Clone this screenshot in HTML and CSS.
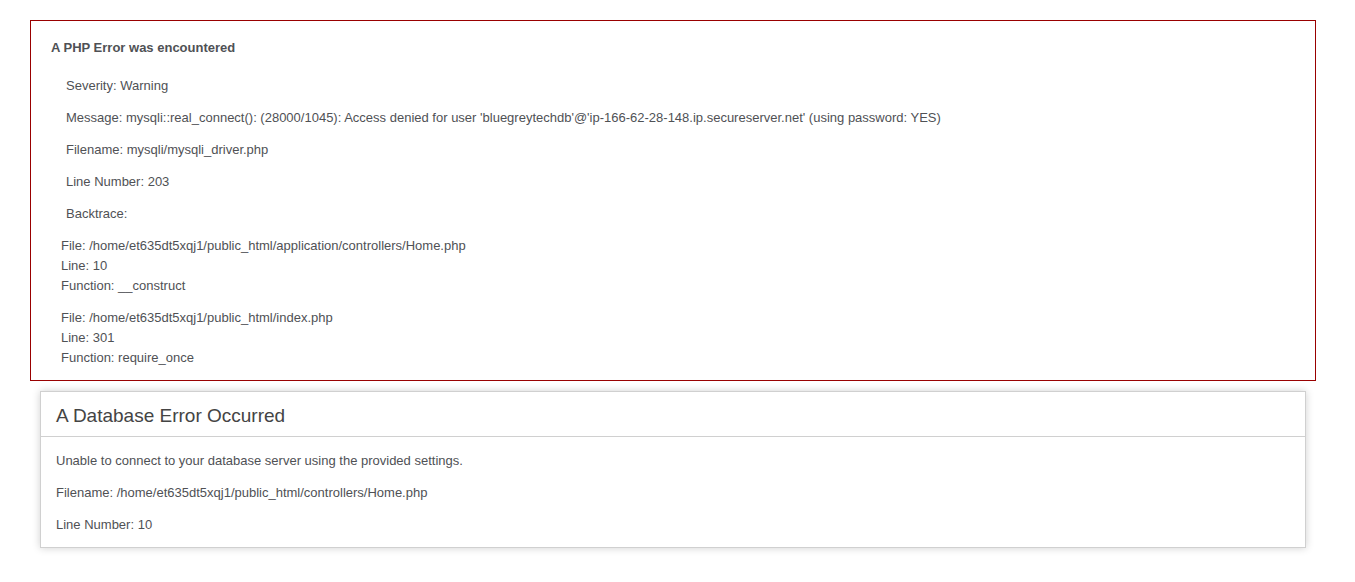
FILE: index.html
```html
<!DOCTYPE html>
<html lang="en">
<head>
<meta charset="utf-8">
<title>Database Error</title>
<link rel="stylesheet" href="styles.css">
</head>
<body>
<div class="php-error">
  <h4 class="php-title">A PHP Error was encountered</h4>
  <p>Severity: Warning</p>
  <p>Message:  mysqli::real_connect(): (28000/1045): Access denied for user 'bluegreytechdb'@'ip-166-62-28-148.ip.secureserver.net' (using password: YES)</p>
  <p>Filename: mysqli/mysqli_driver.php</p>
  <p>Line Number: 203</p>
  <p>Backtrace:</p>
  <p class="trace">File: /home/et635dt5xqj1/public_html/application/controllers/Home.php<br>Line: 10<br>Function: __construct</p>
  <p class="trace">File: /home/et635dt5xqj1/public_html/index.php<br>Line: 301<br>Function: require_once</p>
</div>
<div class="container">
  <h1 class="db-title">A Database Error Occurred</h1>
  <p>Unable to connect to your database server using the provided settings.</p>
  <p>Filename: /home/et635dt5xqj1/public_html/controllers/Home.php</p>
  <p>Line Number: 10</p>
</div>
</body>
</html>
```
FILE: styles.css
```css
body {
  background-color: #fff;
  margin: 20px 39px 20px 30px;
  font: 13px/20px "Liberation Sans", Arial, Helvetica, sans-serif;
  color: #4F5155;
}
p {
  margin: 12px 15px 12px 15px;
}
.php-error {
  border: 1px solid #990000;
  padding-left: 20px;
  margin: 0 0 10px 0;
}
.php-title {
  font-size: 13px;
  font-weight: bold;
  margin: 17.29px 0;
}
.trace {
  margin-left: 10px;
}
.container {
  margin: 10px;
  border: 1px solid #D0D0D0;
  box-shadow: 0 0 8px #D0D0D0;
}
.db-title {
  color: #444;
  background-color: transparent;
  border-bottom: 1px solid #D0D0D0;
  font-size: 19px;
  font-weight: normal;
  margin: 0 0 14px 0;
  padding: 14px 15px 10px 15px;
}
```
